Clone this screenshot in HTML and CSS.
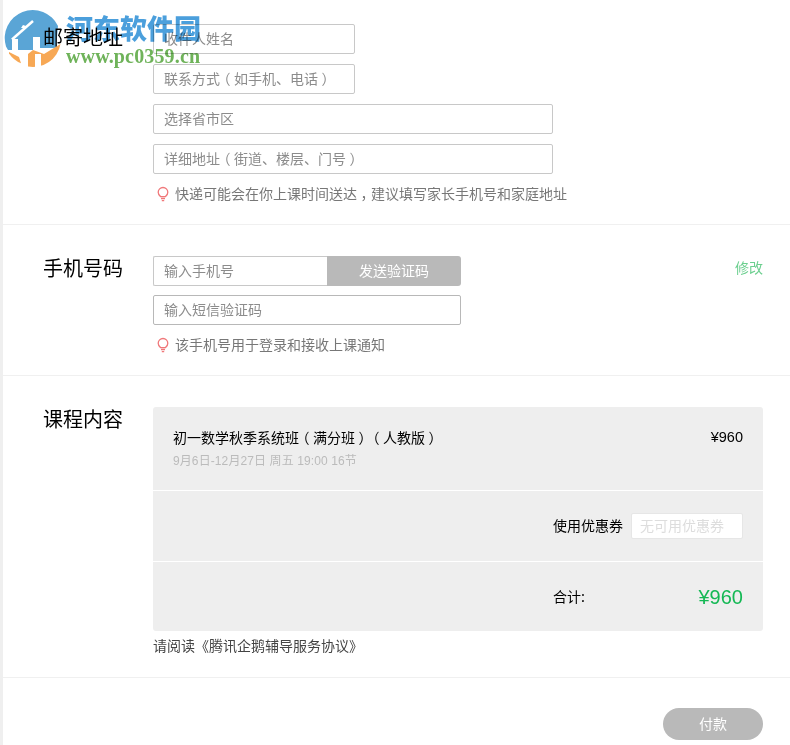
FILE: index.html
```html
<!DOCTYPE html>
<html lang="zh-CN">
<head>
<meta charset="utf-8">
<title>确认订单</title>
<link rel="stylesheet" href="styles.css">
</head>
<body>
<main class="page">
  <section class="section address">
    <h2 class="label">邮寄地址</h2>
    <div class="fields">
      <input class="input short" placeholder="收件人姓名">
      <div class="input short text-field" role="textbox"><span>联系方式<span class="halt">（</span>如手机、电话<span class="halt">）</span></span></div>
      <input class="input long" placeholder="选择省市区">
      <div class="input long text-field" role="textbox"><span>详细地址<span class="halt">（</span>街道、楼层、门号<span class="halt">）</span></span></div>
      <p class="tip">
        <svg class="bulb" viewBox="0 0 12 16" width="12" height="16"><path d="M3.6 10.600C2.200 9.600 1.200 8.200 1.200 6.300a4.800 4.800 0 0 1 9.600 0c0 1.900-1 3.300-2.400 4.300z" fill="none" stroke="#f0787a" stroke-width="1.300"/><path d="M4 12.500h4M4.800 14.600h2.400" fill="none" stroke="#f0787a" stroke-width="1.300"/></svg>
        <span>快递可能会在你上课时间送达<span class="halt">，</span>建议填写家长手机号和家庭地址</span>
      </p>
    </div>
  </section>
  <section class="section phone">
    <h2 class="label">手机号码</h2>
    <div class="fields">
      <div class="phone-row">
        <input class="input phone-input" placeholder="输入手机号">
        <button class="send" type="button">发送验证码</button>
      </div>
      <input class="input code" placeholder="输入短信验证码">
      <p class="tip">
        <svg class="bulb" viewBox="0 0 12 16" width="12" height="16"><path d="M3.6 10.600C2.200 9.600 1.200 8.200 1.200 6.300a4.800 4.800 0 0 1 9.600 0c0 1.900-1 3.300-2.400 4.300z" fill="none" stroke="#f0787a" stroke-width="1.300"/><path d="M4 12.500h4M4.800 14.600h2.400" fill="none" stroke="#f0787a" stroke-width="1.300"/></svg>
        <span>该手机号用于登录和接收上课通知</span>
      </p>
    </div>
    <a class="edit">修改</a>
  </section>
  <section class="section course">
    <h2 class="label">课程内容</h2>
    <div class="fields wide">
      <div class="card">
        <div class="row row-course">
          <div>
            <div class="course-name">初一数学秋季系统班<span class="halt">（</span>满分班<span class="halt">）</span><span class="halt">（</span>人教版<span class="halt">）</span></div>
            <div class="course-meta">9月6日-12月27日 周五 19:00 16节</div>
          </div>
          <div class="price">¥960</div>
        </div>
        <div class="row row-coupon">
          <span class="row-label">使用优惠券</span>
          <input class="coupon" placeholder="无可用优惠券">
        </div>
        <div class="row row-total">
          <span class="row-label total-label">合计:</span>
          <span class="total">¥960</span>
        </div>
      </div>
      <p class="terms">请阅读《腾讯企鹅辅导服务协议》</p>
    </div>
  </section>
  <div class="pay-bar"><button class="pay" type="button">付款</button></div>
</main>
<div class="watermark">
  <svg class="wm-logo" viewBox="4 10 60 60" width="60" height="60">
    <path d="M6 46.400A28 28 0 0 1 58 26L56 48H40V37H33V50H8z" fill="#5aa5d6"/>
    <path d="M12 39.500 33 21" fill="none" stroke="#fff" stroke-width="2.500"/>
    <path d="M12 39h6v11h-6z" fill="#fff"/>
    <path d="M23 25l3 1-1 3-2-1-2 0z" fill="#fff"/>
    <path d="M9 52 19 57 21 63.300A28 28 0 0 1 9 53.400z" fill="#f7a855"/>
    <path d="M28 54 33 50 44 54 60.500 44A28 28 0 0 1 28 66.500z" fill="#f7a855"/>
    <path d="M35 54h6v13h-6z" fill="#fff"/>
  </svg>
  <div class="wm-text">
    <div class="wm-name">河东软件园</div>
    <div class="wm-url">www.pc0359.cn</div>
  </div>
</div>
</body>
</html>
```
FILE: styles.css
```css
* { box-sizing: border-box; }
html, body { margin: 0; padding: 0; background: #fff; }
body {
  font-family: "Noto Sans CJK SC", "Liberation Sans", sans-serif;
  font-size: 14px;
  color: #000;
  height: 745px;
  overflow: hidden;
  position: relative;
  text-spacing-trim: space-all;
}
.page { border-left: 3px solid #efefef; height: 745px; }
.section {
  display: flex;
  border-bottom: 1px solid #f0f0f0;
  padding-left: 40px;
  position: relative;
}
.label {
  width: 110px;
  flex: none;
  margin: 0;
  font-size: 20px;
  font-weight: 400;
  line-height: 30px;
}
.fields { display: flex; flex-direction: column; }
.wide { width: 610px; }
.address { height: 225px; padding-top: 24px; }
.address .label { margin-top: -2px; }
.address .input { margin-bottom: 10px; }
.phone { height: 151px; padding-top: 31px; }
.phone .label { margin-top: -3px; }
.course { height: 302px; padding-top: 31px; }
.course .label { margin-top: -3px; }
.input {
  height: 30px;
  border: 1px solid #c8c8c8;
  border-radius: 2px;
  padding: 0 10px 2px;
  font: 14px/26px "Noto Sans CJK SC", sans-serif;
  background: #fff;
  display: block;
  outline: none;
}
.input::placeholder { color: #8c8c8c; opacity: 1; }
.text-field { color: #8c8c8c; white-space: nowrap; }
.halt { font-feature-settings: "halt"; margin: 0 3.500px; }
.short { width: 202px; }
.long { width: 400px; }
.tip {
  margin: 0;
  display: flex;
  align-items: center;
  gap: 6px;
  height: 20px;
  color: #777;
  font-size: 14px;
  line-height: 18px;
  white-space: nowrap;
}
.tip > span { display: block; padding-bottom: 2px; }
.bulb { flex: none; margin-left: 4px; }
.phone-row { display: flex; width: 308px; margin-bottom: 9px; }
.phone-input { width: 174px; border-right: 0; border-radius: 2px 0 0 2px; }
.send {
  width: 134px;
  height: 30px;
  border: 0;
  border-radius: 0 3px 3px 0;
  background: #b9b9b9;
  color: #fff;
  padding: 0 0 2px;
  font: 14px "Noto Sans CJK SC", sans-serif;
}
.code { width: 308px; border-color: #b8b8b8; margin-bottom: 10px; }
.edit {
  position: absolute;
  right: 27px;
  top: 32px;
  color: #6ccf8f;
  font-size: 14px;
  line-height: 20px;
}
.card {
  background: #eee;
  border-radius: 3px;
  height: 224px;
  display: flex;
  flex-direction: column;
}
.row { display: flex; padding: 0 20px; }
.row + .row { border-top: 1px solid #fff; }
.row-course { height: 83px; justify-content: space-between; padding-top: 20px; }
.course-name { font-size: 14px; line-height: 20px; white-space: nowrap; }
.course-meta { color: #bbb; font-size: 12px; line-height: 20px; margin-top: 4px; letter-spacing: .1px; font-family: "Liberation Sans", "Noto Sans CJK SC", sans-serif; }
.price { font: 14.500px/20px "Liberation Sans", sans-serif; }
.row-coupon { height: 71px; align-items: center; justify-content: flex-end; gap: 8px; padding-bottom: 1px; position: relative; }
.row-label { font-size: 14px; line-height: 18px; padding-bottom: 2px; }
.coupon {
  width: 112px;
  height: 26px;
  border: 1px solid #e6e6e6;
  border-radius: 2px;
  background: #fff;
  padding: 0 8px 2px;
  font: 14px "Noto Sans CJK SC", sans-serif;
  outline: none;
}
.coupon::placeholder { color: #ddd; opacity: 1; }
.row-total { flex: 1; align-items: center; justify-content: space-between; padding-left: 400px; }
.total { color: #14b854; font: 20px/24px "Liberation Sans", sans-serif; }
.terms { margin: 4px 0 0; line-height: 20px; color: #444; font-size: 14px; white-space: nowrap; }
.pay-bar { display: flex; justify-content: flex-end; padding: 30px 27px 0 0; }
.pay {
  width: 100px;
  height: 32px;
  border: 0;
  border-radius: 16px;
  background: #b9b9b9;
  color: #fff;
  padding: 0 0 2px;
  font: 14px "Noto Sans CJK SC", sans-serif;
}
.watermark {
  position: absolute;
  left: 4px;
  top: 10px;
  display: flex;
  pointer-events: none;
  mix-blend-mode: multiply;
}
.wm-logo { flex: none; }
.wm-text { margin-left: 2px; }
.wm-name {
  font: 900 27px/32px "Noto Sans CJK SC", sans-serif;
  color: #4b9fdc;
  white-space: nowrap;
  margin-top: 2px;
}
.wm-url {
  font: 700 20px/22px "Liberation Serif", serif;
  color: #6fb35a;
  margin-top: 1px;
  letter-spacing: .15px;
  white-space: nowrap;
}
```
